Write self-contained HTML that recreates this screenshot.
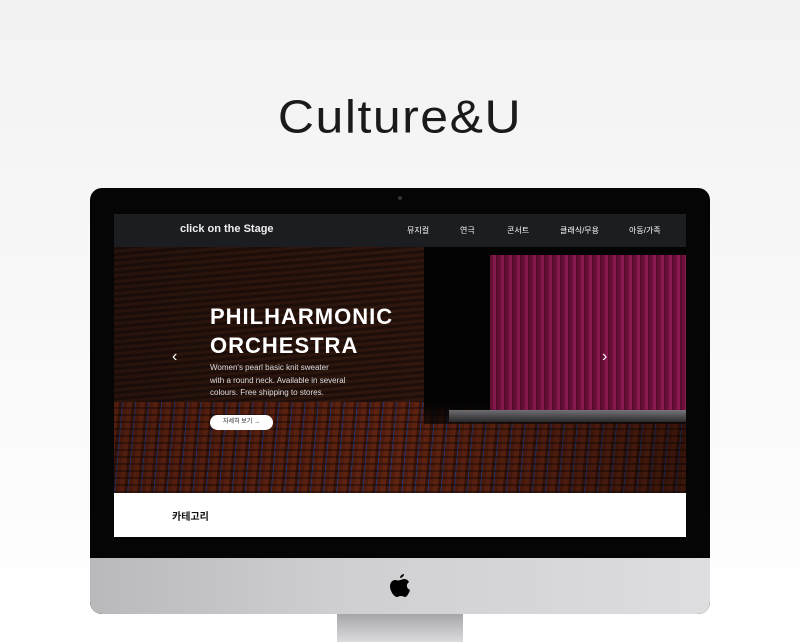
<!DOCTYPE html>
<html><head><meta charset="utf-8"><style>
*{margin:0;padding:0;box-sizing:border-box}
body{width:800px;height:642px;overflow:hidden;background:linear-gradient(#f2f2f2,#fafafa 60%,#fff);font-family:"Liberation Sans","Noto Sans CJK KR",sans-serif;position:relative}
.title{position:absolute;top:88px;left:0;width:800px;text-align:center;font-size:50px;color:#1a1a1a;letter-spacing:1.5px;font-weight:normal;transform:scaleY(.92)}
.mon{position:absolute;left:90px;top:188px;width:620px;height:426px;border-radius:12px;overflow:hidden;background:#050505}
.chin{position:absolute;left:0;top:370px;width:620px;height:56px;background:linear-gradient(90deg,#b9b9bb,#cfcfd1 40%,#d6d6d8 70%,#dedee0);border-radius:0 0 12px 12px}
.stand{position:absolute;left:337px;top:614px;width:126px;height:28px;background:linear-gradient(#a5a5a7,#dcdcde)}
.screen{position:absolute;left:24px;top:26px;width:572px;height:323px;background:#fff;overflow:hidden}
.nav{position:absolute;left:0;top:0;width:572px;height:33px;background:#1c1d20;color:#fff}
.logo{position:absolute;left:66px;top:9px;font-size:11px;font-weight:bold;color:#eee}
.menu span{position:absolute;top:11px;font-size:8px}
.hero{position:absolute;left:0;top:33px;width:572px;height:246px;background:
linear-gradient(180deg,transparent 60%,rgba(0,0,0,.2)),
repeating-linear-gradient(175deg,#22100a 0 3px,#34190f 3px 6px)}
.right{position:absolute;left:310px;top:0;width:262px;height:246px;background:#030303}
.curtain{position:absolute;left:376px;top:8px;width:196px;height:165px;background:repeating-linear-gradient(90deg,#6d0f3a 0 3px,#8c1a50 3px 6px,#5a0c30 6px 8px)}
.floor{position:absolute;left:335px;top:163px;width:237px;height:12px;background:linear-gradient(#77777b,#2b2b2e)}
.seats{position:absolute;left:0;top:155px;width:572px;height:91px;background:
linear-gradient(90deg,rgba(0,0,0,0),rgba(0,0,0,0) 50%,rgba(0,0,0,.45)),
repeating-linear-gradient(0deg,rgba(0,0,0,.35) 0 2px,transparent 2px 7px),
repeating-linear-gradient(95deg,#6a2713 0 5px,#44170a 5px 8px,#2a3f80 8px 9px,#5b200f 9px 13px)}
.blk{position:absolute;left:310px;top:155px;width:262px;height:22px;background:linear-gradient(#030303,rgba(3,3,3,.6))}
.fade{position:absolute;left:0;top:0;width:572px;height:246px;background:linear-gradient(90deg,rgba(0,0,0,.25),rgba(0,0,0,.1) 50%,transparent)}
.h1{position:absolute;left:96px;top:55px;color:#fff;font-size:22px;font-weight:bold;line-height:29px;letter-spacing:1px}
.p{position:absolute;left:96px;top:115px;color:#ddd;font-size:8px;line-height:12.5px}
.btn{position:absolute;left:96px;top:168px;width:63px;height:15px;background:#fff;border-radius:8px;font-size:6px;color:#222;text-align:center;line-height:15px}
.arr{position:absolute;top:101px;color:#fff;font-size:16px}
.cat{position:absolute;left:58px;top:294px;font-size:10px;font-weight:bold;color:#111}
</style></head><body>
<div class="title">Culture&amp;U</div>
<div class="mon">
<div style="position:absolute;left:308px;top:8px;width:4px;height:4px;border-radius:50%;background:#333"></div>
<div class="screen">
<div class="hero">
<div class="seats"></div>
<div class="right" style="height:155px"></div>
<div class="blk"></div>
<div class="curtain"></div>
<div class="floor"></div>
<div class="fade"></div>
<div class="h1">PHILHARMONIC<br>ORCHESTRA</div>
<div class="p">Women's pearl basic knit sweater<br>with a round neck. Available in several<br>colours. Free shipping to stores.</div>
<div class="btn">자세히 보기 →</div>
<div class="arr" style="left:58px">‹</div>
<div class="arr" style="left:488px">›</div>
</div>
<div class="nav"><div class="logo">click on the Stage</div>
<div class="menu"><span style="left:293px">뮤지컬</span><span style="left:346px">연극</span><span style="left:393px">콘서트</span><span style="left:446px">클래식/무용</span><span style="left:515px">아동/가족</span></div></div>
<div class="cat">카테고리</div>
</div>
<div class="chin">
<svg style="position:absolute;left:299px;top:15px" width="22" height="26" viewBox="0 0 22 26"><path d="M15 1c0 2-2 4-4 4 0-2 2-4 4-4zM11 7c1 0 3-1 4-1 2 0 4 1 5 3-3 2-3 6 1 8-1 3-3 7-5 7-1 0-2-1-4-1s-3 1-4 1C5 24 1 18 1 13c0-4 3-6 5-6 2 0 3 1 5 0z" fill="#000"/></svg>
</div>
</div>
<div class="stand"></div>
</body></html>
